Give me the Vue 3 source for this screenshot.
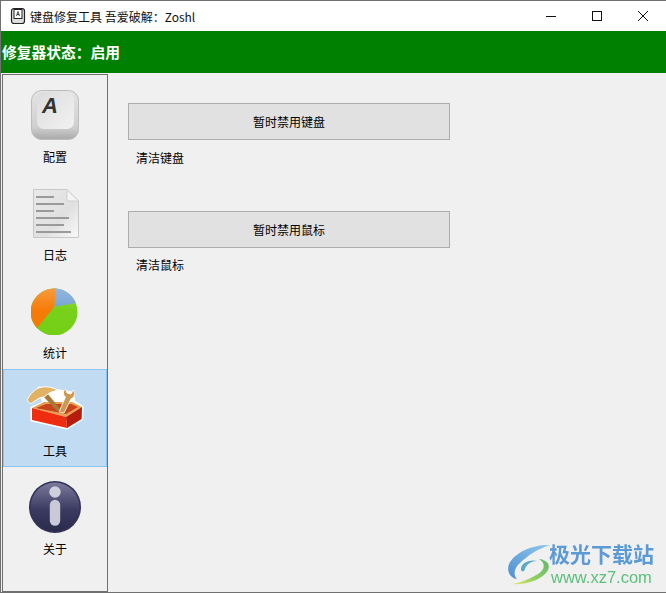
<script setup>
const tools = [
  { label: '暂时禁用键盘', note: '清洁键盘' },
  { label: '暂时禁用鼠标', note: '清洁鼠标' },
]
const nav = [
  { id: 'key', label: '配置' },
  { id: 'log', label: '日志' },
  { id: 'pie', label: '统计' },
  { id: 'box', label: '工具', active: true },
  { id: 'info', label: '关于' },
]
</script>

<template>
  <div class="window">
    <header class="titlebar">
      <svg class="app-icon" width="16" height="18" viewBox="0 0 16 18">
        <rect x="1.5" y="1.5" width="13" height="15" rx="2.5" fill="#ddd" stroke="#222" stroke-width="1.2" />
        <rect x="4" y="2.5" width="8" height="9" fill="#fff" stroke="#222" stroke-width="1" />
        <path d="M6.5 9 8 4.5 9.5 9M7 7.5h2" fill="none" stroke="#222" stroke-width=".8" />
      </svg>
      <span class="title">键盘修复工具 吾爱破解：Zoshl</span>
      <div class="controls">
        <svg width="46" height="30" viewBox="0 0 46 30"><path d="M18 15.5h10" stroke="#111" stroke-width="1" /></svg>
        <svg width="46" height="30" viewBox="0 0 46 30"><rect x="18.5" y="10.5" width="9" height="9" fill="none" stroke="#111" stroke-width="1" /></svg>
        <svg width="46" height="30" viewBox="0 0 46 30"><path d="M18 10l10 10M28 10L18 20" stroke="#111" stroke-width="1" /></svg>
      </div>
    </header>
    <div class="status">修复器状态：启用</div>
    <div class="body">
      <nav class="sidebar">
        <div v-for="item in nav" :key="item.id" class="nav-item" :class="{ active: item.active }">
          <div class="nav-icon">
            <svg v-if="item.id === 'key'" width="50" height="50" viewBox="-1 0 50 50">
              <defs>
                <linearGradient id="keyBase" x1="0" y1="0" x2="0" y2="1"><stop offset="0" stop-color="#e4e4e4" /><stop offset=".75" stop-color="#cfcfcf" /><stop offset="1" stop-color="#a9a9a9" /></linearGradient>
                <linearGradient id="keyTop" x1="0" y1="0" x2="1" y2="1"><stop offset="0" stop-color="#dcdcdc" /><stop offset="1" stop-color="#f2f2f2" /></linearGradient>
              </defs>
              <rect x=".5" y=".5" width="47" height="49" rx="10" fill="url(#keyBase)" stroke="#bdbdbd" />
              <rect x="6" y="2" width="37" height="37" rx="7" fill="url(#keyTop)" />
              <text x="11" y="23" class="key-a">A</text>
            </svg>
            <svg v-else-if="item.id === 'log'" width="48" height="52" viewBox="-1 -1 48 52">
              <defs>
                <linearGradient id="paper" x1="0" y1="0" x2="1" y2="1"><stop offset="0" stop-color="#e9e9e9" /><stop offset=".6" stop-color="#e0e0e0" /><stop offset="1" stop-color="#fafafa" /></linearGradient>
              </defs>
              <path d="M1.5 1.5H35L46.5 13V49.5H1.5Z" fill="url(#paper)" stroke="#c8c8c8" />
              <path d="M35 1.5V13H46.5Z" fill="#f4f4f4" stroke="#cfcfcf" />
              <path d="M4 9h18M4 16h28M4 23h18M4 30h33M4 37h28M4 44h35" stroke="#9a9a9a" stroke-width="2" />
            </svg>
            <svg v-else-if="item.id === 'pie'" width="48" height="48" viewBox="1 -1 48 48">
              <defs>
                <linearGradient id="pieGloss" x1="0" y1="0" x2="0" y2="1"><stop offset="0" stop-color="#fff" stop-opacity=".25" /><stop offset=".45" stop-color="#fff" stop-opacity=".03" /><stop offset="1" stop-color="#fff" stop-opacity="0" /></linearGradient>
              </defs>
              <circle cx="24" cy="24" r="23.5" fill="#74cf14" />
              <path d="M24.3 18.7 26 .6A23.5 23.5 0 0 1 45.8 15Z" fill="#6f9fd4" />
              <path d="M24.3 18.7 7 40A23.5 23.5 0 0 1 26 .6Z" fill="#f67800" />
              <circle cx="24" cy="24" r="23.5" fill="url(#pieGloss)" />
            </svg>
            <svg v-else-if="item.id === 'box'" width="58" height="48" viewBox="0 0 58 48">
              <path d="M6 23 18 18 13 3 33 6 46 8 48 17 56 22 55.7 34 41 43 6 35Z" fill="#fff" stroke="#fff" stroke-width="3" stroke-linejoin="round" />
              <path d="M6 23 18 17 46 17 56 22 40 32Z" fill="#e8a050" />
              <path d="M10 23 20 19 45 19 52 22 40 29Z" fill="#c8431a" />
              <path d="M16 10 31 26 36 26 21 8Z" fill="#a87838" />
              <path d="M1.3 14.7C4 9 9 4 14 2.5 21 .5 29 3 33 6 29 5 25 7 22 9L18 12C14 12 10 15 6 18 4 19 2 17 1.3 14.7Z" fill="#e2b264" stroke="#fff" stroke-width="1" />
              <path d="M33 27 39.500 12C37 10 36.500 6 39.500 4L41 8 45 9 47.500 5C49.500 8 49 12 45 14L38 28Z" fill="#cb9a52" stroke="#fff" stroke-width=".8" />
              <path d="M6 23 40 32 41 43 6 35Z" fill="#ee2c10" />
              <path d="M40 32 56 22 55.700 34 41 43Z" fill="#b71d0c" />
            </svg>
            <svg v-else width="52" height="52" viewBox="0 0 50 50">
              <defs>
                <linearGradient id="infoBall" x1="0" y1="0" x2="0" y2="1"><stop offset="0" stop-color="#7c7a9a" /><stop offset=".55" stop-color="#3b3a62" /><stop offset="1" stop-color="#2a2a4c" /></linearGradient>
              </defs>
              <circle cx="25" cy="25" r="25" fill="#33335a" />
              <circle cx="25" cy="25" r="23.5" fill="url(#infoBall)" />
              <circle cx="25" cy="10.500" r="5.500" fill="#cfcfdc" />
              <rect x="20" y="18" width="10" height="25" rx="5" fill="#c9c9d8" />
            </svg>
          </div>
          <span class="nav-label">{{ item.label }}</span>
        </div>
      </nav>
      <main class="content">
        <section v-for="t in tools" :key="t.label" class="tool">
          <button class="btn" type="button">{{ t.label }}</button>
          <p class="note">{{ t.note }}</p>
        </section>
      </main>
    </div>
    <div class="watermark">
      <svg width="46" height="42" viewBox="0 0 46 42">
        <defs>
          <linearGradient id="wmBlue" x1="1" y1="0" x2="0" y2="1"><stop offset="0" stop-color="#8fc8ee" /><stop offset="1" stop-color="#4f8fd0" /></linearGradient>
          <linearGradient id="wmGreen" x1="1" y1="0" x2="0" y2="1"><stop offset="0" stop-color="#5fba6a" /><stop offset=".6" stop-color="#8fd060" /><stop offset="1" stop-color="#e6e86a" /></linearGradient>
        </defs>
        <path d="M44 2C28 1 9 9 3 21 0 29 5 35 11 36 7 32 8 25 14 20 22 12 32 6 44 2Z" fill="url(#wmBlue)" />
        <path d="M15 27C14 20 24 16 31 18 26 18 20 21 19 26 18 29 16 29 15 27Z" fill="#5aa9c8" />
        <path d="M33 16C40 20 39 27 32 31 24 36 14 40 6 41 18 42 33 38 40 30 46 23 42 17 33 16Z" fill="url(#wmGreen)" />
      </svg>
      <div class="wm-text">
        <span class="wm-cn">极光下载站</span>
        <span class="wm-url">www.xz7.com</span>
      </div>
    </div>
  </div>
</template>

<style>
html, body { margin: 0; background: #f0f0f0; }
</style>

<style scoped>
.window {
  position: relative;
  width: 666px;
  height: 593px;
  box-sizing: border-box;
  border: 1px solid #707070;
  border-right: 0;
  background: #f0f0f0;
  font-family: "Noto Sans CJK SC", "Liberation Sans", sans-serif;
  font-size: 12px;
  color: #000;
  display: flex;
  flex-direction: column;
  overflow: hidden;
}
.titlebar {
  height: 30px;
  flex: none;
  display: flex;
  align-items: center;
  background: #fff;
  padding-left: 9px;
}
.app-icon { margin-right: 4px; }
.title { font-size: 12px; color: #111; }
.controls { margin-left: auto; display: flex; }
.status {
  height: 42px;
  flex: none;
  line-height: 42px;
  background: #008000;
  color: #fff;
  font-size: 14.750px;
  font-weight: 700;
  padding-left: 1px;
}
.body { flex: 1; display: flex; min-height: 0; padding-top: 1px; }
.sidebar {
  width: 104px;
  height: 516px;
  flex: none;
  margin-left: 1px;
  border: 1px solid #707070;
  display: flex;
  flex-direction: column;
}
.nav-item {
  height: 98px;
  box-sizing: border-box;
  flex: none;
  display: flex;
  flex-direction: column;
  align-items: center;
}
.nav-item.active {
  background: #c1dcf2;
  box-shadow: inset 0 0 0 1px #8cc4f4;
}
.nav-icon {
  height: 70px;
  width: 100%;
  display: flex;
  align-items: center;
  justify-content: center;
  padding-top: 10px;
  box-sizing: border-box;
}
.nav-label { line-height: 16px; margin-top: 4px; }
.key-a { font-family: "Liberation Sans", sans-serif; font-size: 22px; font-weight: 700; font-style: italic; fill: #333; }
.content { padding: 29px 0 0 20px; display: flex; flex-direction: column; gap: 34px; }
.tool { width: 322px; height: 74px; }
.btn {
  display: block;
  width: 322px;
  height: 37px;
  box-sizing: border-box;
  border: 1px solid #adadad;
  background: #e1e1e1;
  font: inherit;
  color: #000;
  padding: 0;
}
.note { margin: 0; padding: 10px 0 0 8px; line-height: 16px; }
.tool:last-child .note { padding-top: 9px; }
.watermark {
  position: absolute;
  left: 505px;
  top: 540px;
  display: flex;
  align-items: center;
  gap: 0;
  filter: blur(0.4px);
}
.wm-text { display: flex; flex-direction: column; margin-left: -3px; }
.wm-cn { color: #5b9ad5; font-size: 21px; font-weight: 700; line-height: 25px; white-space: nowrap; }
.wm-url { color: #5cc07c; font-family: "Liberation Sans", sans-serif; font-size: 16.500px; line-height: 17px; margin-top: 3px; margin-left: 2px; white-space: nowrap; }
</style>
